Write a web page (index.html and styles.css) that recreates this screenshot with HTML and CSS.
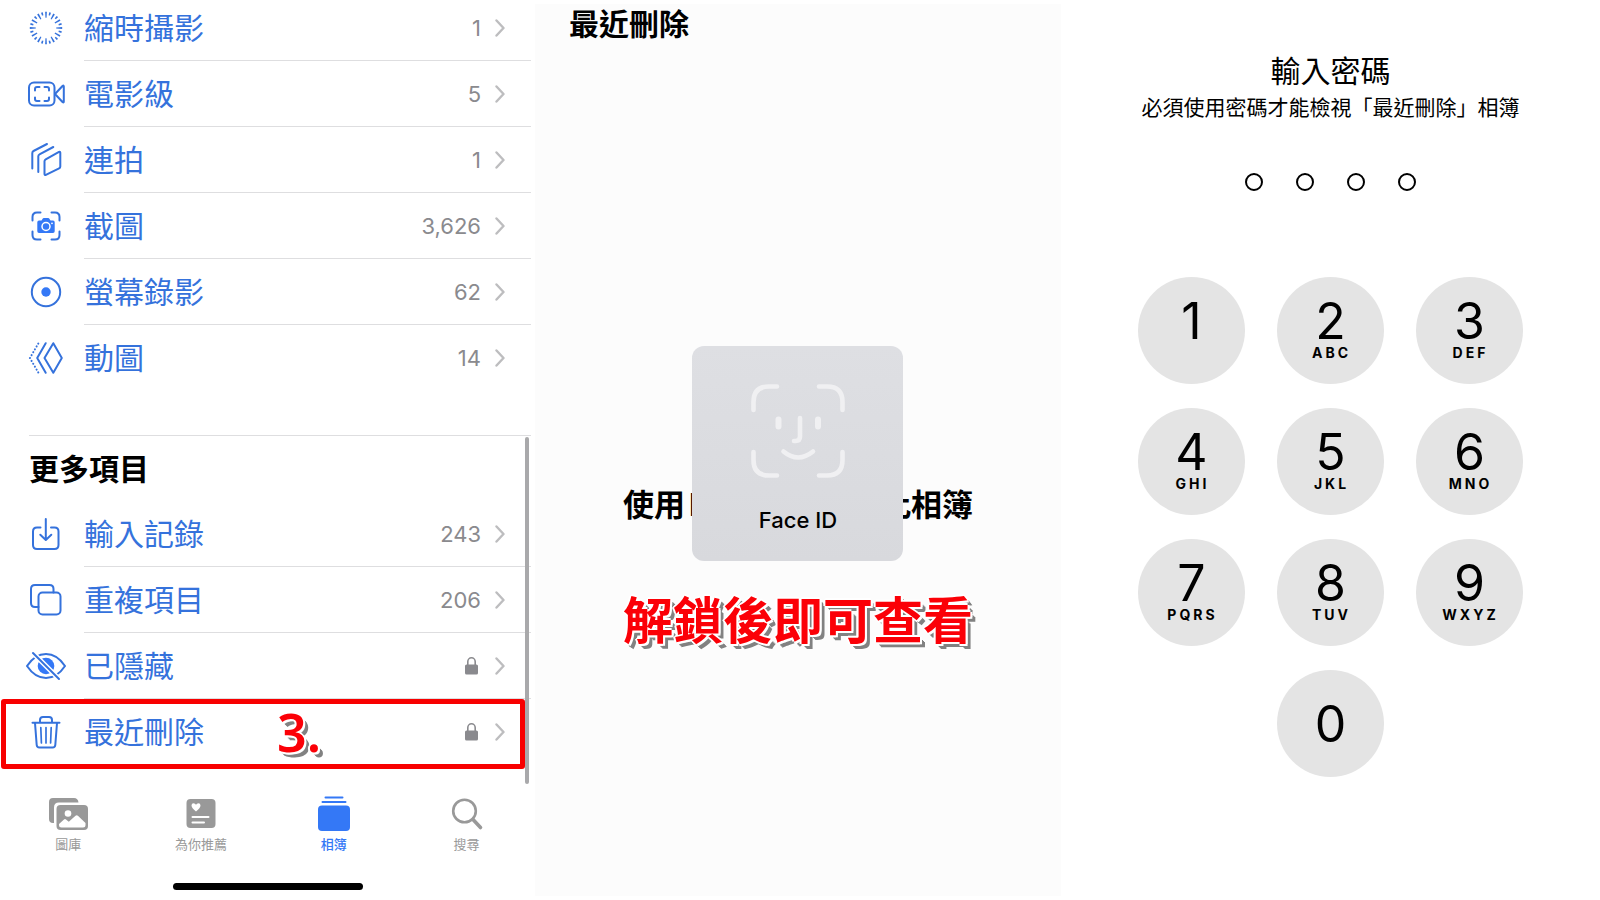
FILE: index.html
```
<!DOCTYPE html>
<html lang="zh-Hant">
<head>
    <meta charset="UTF-8">
    <meta name="viewport" content="width=device-width, initial-scale=1.0">
    <title>最近刪除</title>
    <link rel="stylesheet" href="styles.css">
</head>
<body>

    <svg class="defs" width="0" height="0" aria-hidden="true">
        <symbol id="chevron" viewBox="0 0 10 18"><path d="M1.5 1.5 8.5 9l-7 7.5" fill="none" stroke="#bdbdbf" stroke-width="2.4" stroke-linecap="round" stroke-linejoin="round"/></symbol>
        <symbol id="lock" viewBox="0 0 13 18"><rect y="7.5" width="13" height="10" rx="1.6" fill="#8a8a8e"/><path d="M2.8 8V4.8a3.7 4 0 0 1 7.4 0V8" fill="none" stroke="#8a8a8e" stroke-width="1.6"/></symbol>
    </svg>

    <main class="steps">
        <!-- 相簿清單 -->
        <section class="panel albums">
            <nav class="list media-list">
                <a class="row" href="#">
                    <svg class="icon" viewBox="0 0 40 40"><circle cx="20" cy="20" r="13.2" stroke-width="6" pathLength="240" stroke-dasharray="4.4 15.6" stroke-dashoffset="2.2"/><circle cx="20" cy="20" r="14.6" stroke-width="3" pathLength="240" stroke-dasharray="4.2 15.8" stroke-dashoffset="-7.9"/></svg>
                    <span class="line"><span class="name">縮時攝影</span><span class="count">1</span><svg class="chevron"><use href="#chevron"/></svg></span>
                </a>
                <a class="row" href="#">
                    <svg class="icon" viewBox="0 0 40 40"><rect x="3" y="8.5" width="25.5" height="23" rx="5"/><path d="M29 20l7.5-8q1.3-1 1.3.6v14.8q0 1.6-1.3.6zM9 16.5v-1.5q0-2 2-2h2.5M18.5 13h2.5q2 0 2 2v1.5M23 23.5v1.5q0 2-2 2h-2.5M13.500 27h-2.5q-2 0-2-2v-1.5"/></svg>
                    <span class="line"><span class="name">電影級</span><span class="count">5</span><svg class="chevron"><use href="#chevron"/></svg></span>
                </a>
                <a class="row" href="#">
                    <svg class="icon" viewBox="0 0 40 40"><path d="M21 4 7.5 11q-1.2.6-1.2 2V28.5M27.3 7 13.5 14.3q-1.2.6-1.2 2V32M18.5 21.3q0-1.3 1.2-2L33 11.9q1.3-.6 1.3.8V26.5q0 1.3-1.2 1.9L19.9 34.8q-1.4.6-1.4-.8z"/></svg>
                    <span class="line"><span class="name">連拍</span><span class="count">1</span><svg class="chevron"><use href="#chevron"/></svg></span>
                </a>
                <a class="row" href="#">
                    <svg class="icon" viewBox="0 0 40 40"><path d="M6.5 14.5V11q0-4.500 4.500-4.500h3.500M25.500 6.500H29q4.500 0 4.500 4.500v3.500M33.500 25.500V29q0 4.500-4.500 4.500h-3.500M14.500 33.500H11q-4.500 0-4.500-4.500v-3.500"/><path class="solid" d="M13 14.500h2.500l1.300-2q.3-.4.900-.4h4.600q.6 0 .9.400l1.300 2H27q1.700 0 1.700 1.700v9q0 1.700-1.700 1.700H13q-1.700 0-1.700-1.700v-9q0-1.700 1.700-1.700z"/><circle class="white" cx="20" cy="20.5" r="4"/><circle class="white-dot" cx="26" cy="17.3" r=".9"/></svg>
                    <span class="line"><span class="name">截圖</span><span class="count">3,626</span><svg class="chevron"><use href="#chevron"/></svg></span>
                </a>
                <a class="row" href="#">
                    <svg class="icon" viewBox="0 0 40 40"><circle cx="20" cy="20" r="14.2"/><circle class="solid" cx="20" cy="20" r="4.7"/></svg>
                    <span class="line"><span class="name">螢幕錄影</span><span class="count">62</span><svg class="chevron"><use href="#chevron"/></svg></span>
                </a>
                <a class="row" href="#">
                    <svg class="icon" viewBox="0 0 40 40"><path d="M27.3 5.2 35.8 20l-8.5 14.8L18.5 20zM19.7 5.2 11.2 20l8.5 14.8"/><path d="M12.3 5.5 3.9 20l8.4 14.5" stroke-dasharray=".1 3.24"/></svg>
                    <span class="line"><span class="name">動圖</span><span class="count">14</span><svg class="chevron"><use href="#chevron"/></svg></span>
                </a>
            </nav>

            <div class="more">
                <h2 class="more-title">更多項目</h2>
                <nav class="list">
                    <a class="row" href="#">
                        <svg class="icon" viewBox="0 0 40 40"><path d="M14.5 13.5H11q-4 0-4 4V31q0 4 4 4h17.5q4 0 4-4V17.5q0-4-4-4H25M19.8 5v20.5M14.3 20.8l5.500 5.200 5.500-5.200"/></svg>
                        <span class="line"><span class="name">輸入記錄</span><span class="count">243</span><svg class="chevron"><use href="#chevron"/></svg></span>
                    </a>
                    <a class="row" href="#">
                        <svg class="icon" viewBox="0 0 40 40"><rect x="12.5" y="12.5" width="22" height="22" rx="4"/><path d="M12.5 27H9q-4 0-4-4V9q0-4 4-4h14.5q4 0 4 4v3.5"/></svg>
                        <span class="line"><span class="name">重複項目</span><span class="count">206</span><svg class="chevron"><use href="#chevron"/></svg></span>
                    </a>
                    <a class="row" href="#">
                        <svg class="icon" viewBox="0 0 40 40"><path d="M1 20Q9 8 20 8t19 12Q31 32 20 32T1 20z"/><circle class="solid" cx="20" cy="20" r="8.3"/><path class="gap" d="M6 6l27.5 27.5"/><path d="M7 7l26 26"/></svg>
                        <span class="line"><span class="name">已隱藏</span><svg class="lock" role="img" aria-label="已鎖定"><use href="#lock"/></svg><svg class="chevron"><use href="#chevron"/></svg></span>
                    </a>
                    <a class="row marked" href="#">
                        <svg class="icon" viewBox="0 0 40 40"><path d="M6.5 10.8h27M14 10.5V8q0-3 3-3h6q3 0 3 3v2.5M9 11l1.7 22q.2 2.5 2.7 2.5h13.2q2.5 0 2.7-2.5L31 11"/><path d="M14.8 15.5l.6 15.5M20 15.5V31M25.2 15.5 24.6 31" stroke-width="1.7"/></svg>
                        <span class="line"><span class="name">最近刪除</span><svg class="lock" role="img" aria-label="已鎖定"><use href="#lock"/></svg><svg class="chevron"><use href="#chevron"/></svg></span>
                        <span class="step-no note">3.</span>
                    </a>
                </nav>
                <div class="scroll-thumb"></div>
            </div>

            <nav class="tabs">
                <a class="tab" href="#">
                    <svg viewBox="0 0 40 36"><path fill="currentColor" d="M5 2h21q4 0 4.5 4.5H11q-5 0-5 5V27H5q-4 0-4-4V6q0-4 4-4z"/><rect x="8.5" y="9" width="31.5" height="25" rx="4" fill="currentColor"/><circle cx="20" cy="17.5" r="3.3" fill="#fff"/><path fill="#fff" d="M11 28l5-4.5q1-.8 2 0l2.8 2.3 6.7-6q1.2-1 2.4 0L37.5 27v2q0 2.5-2.5 2.5H13.500Q11 31.500 11 29z"/></svg>
                    <span>圖庫</span>
                </a>
                <a class="tab" href="#">
                    <svg viewBox="0 0 40 36"><rect x="5.5" y="3" width="29" height="29" rx="4" fill="currentColor"/><path fill="#fff" d="M15 15.5Q10.500 12 10.500 9.500q0-2.300 2.100-2.300 1.600 0 2.400 1.600.8-1.600 2.400-1.600 2.100 0 2.100 2.300 0 2.500-4.500 6z"/><path d="M11.5 21h16M11.5 26.500h11.500" stroke="#fff" stroke-width="2" stroke-linecap="round"/></svg>
                    <span>為你推薦</span>
                </a>
                <a class="tab current" href="#">
                    <svg viewBox="0 0 40 36"><rect x="4" y="9.5" width="32" height="25.5" rx="4" fill="currentColor"/><path d="M8.5 6h23M11.5 1.5h17" stroke="currentColor" stroke-width="2" stroke-linecap="round"/></svg>
                    <span>相簿</span>
                </a>
                <a class="tab" href="#">
                    <svg viewBox="0 0 40 36"><circle cx="17.5" cy="15" r="11.3" fill="none" stroke="currentColor" stroke-width="2.6"/><path d="M26 23.5l7.5 8" stroke="currentColor" stroke-width="3.6" stroke-linecap="round"/></svg>
                    <span>搜尋</span>
                </a>
            </nav>
            <div class="home-bar"></div>
        </section>

        <!-- Face ID 解鎖 -->
        <section class="panel unlock">
            <h1 class="unlock-title">最近刪除</h1>
            <div class="prompt">
                <p class="prompt-text">使用<span class="latin">Face ID</span>檢視此相簿</p>
                <div class="face-card">
                    <svg class="face" viewBox="0 0 94 94"><path d="M2.5 26V18Q2.5 2.5 18 2.5h8M68 2.5h8q15.5 0 15.5 15.5v8M91.5 68v8q0 15.5-15.5 15.5h-8M26 91.5h-8Q2.5 91.5 2.5 76v-8" stroke-width="4.6"/><path d="M27.5 35.5v7M67 35.5v7" stroke-width="6"/><path d="M49 34v18.5q0 4.5-4.5 4.5h-1.5M32.5 67.5q14.500 12 29.500 0" stroke-width="4.6"/></svg>
                    <span class="face-label">Face ID</span>
                </div>
            </div>
            <p class="caption note">解鎖後即可查看</p>
        </section>

        <!-- 密碼輸入 -->
        <section class="panel passcode">
            <h2 class="pass-title">輸入密碼</h2>
            <p class="pass-text">必須使用密碼才能檢視「最近刪除」相簿</p>
            <div class="dots"><i></i><i></i><i></i><i></i></div>
            <div class="keypad">
                <button class="key" type="button">1<small></small></button>
                <button class="key" type="button">2<small>ABC</small></button>
                <button class="key" type="button">3<small>DEF</small></button>
                <button class="key" type="button">4<small>GHI</small></button>
                <button class="key" type="button">5<small>JKL</small></button>
                <button class="key" type="button">6<small>MNO</small></button>
                <button class="key" type="button">7<small>PQRS</small></button>
                <button class="key" type="button">8<small>TUV</small></button>
                <button class="key" type="button">9<small>WXYZ</small></button>
                <button class="key zero" type="button">0</button>
            </div>
        </section>
    </main>

</body>
</html>
```
FILE: styles.css
```
* {
    margin: 0;
    padding: 0;
    box-sizing: border-box;
}

body {
    background: #fff;
    color: #000;
    font-family: Inter, "Noto Sans CJK TC", sans-serif;
    overflow-x: hidden;
}

a {
    color: inherit;
    text-decoration: none;
}

.defs {
    position: absolute;
}

.steps {
    display: grid;
    grid-template-columns: 535fr 526fr 539fr;
    min-height: 100vh;
    overflow: hidden;
}

/* albums */
.media-list {
    margin: -5px 4px 0 0;
}

.row {
    position: relative;
    display: flex;
    align-items: center;
    gap: 18px;
    height: 66px;
    padding-left: 26px;
    color: #3572dc;
}

.icon {
    flex: none;
    width: 40px;
    height: 40px;
    fill: none;
    stroke: #3572dc;
    stroke-width: 2;
    stroke-linecap: round;
    stroke-linejoin: round;
}

.icon circle {
    stroke-linecap: butt;
}

.icon .solid {
    fill: #3478f6;
    stroke: none;
}

.icon .white {
    stroke: #fff;
    stroke-width: 1.5;
}

.icon .white-dot {
    fill: #fff;
    stroke: none;
}

.icon .gap {
    stroke: #fff;
    stroke-width: 5;
}

.line {
    flex: 1;
    display: flex;
    align-items: center;
    height: 100%;
    padding-right: 26px;
    border-bottom: 1px solid #dedee0;
}

.row:last-child .line {
    border-bottom-color: transparent;
}

.name {
    flex: 1;
    font-size: 30px;
    line-height: 40px;
}

.count {
    color: #8a8a8e;
    font-size: 22px;
}

.chevron {
    width: 10px;
    height: 18px;
    margin-left: 14px;
}

.lock {
    width: 13px;
    height: 18px;
    margin-right: 3px;
}

.more {
    position: relative;
    margin: 44px 4px 0 0;
}

.more-title {
    height: 66px;
    margin-left: 29px;
    border-top: 1px solid #dedee0;
    font-size: 30px;
    font-weight: 700;
    line-height: 66px;
}

.scroll-thumb {
    position: absolute;
    top: 2px;
    right: 2px;
    bottom: -19px;
    width: 4px;
    border-radius: 2px;
    background: #a9a9ab;
}

.marked::after {
    content: "";
    position: absolute;
    inset: 0 6px -4px 1px;
    border: 5px solid #f80000;
    border-radius: 3px;
}

.note {
    color: #fb0007;
    text-shadow: 2px 0 #fff, -2px 0 #fff, 0 2px #fff, 0 -2px #fff, 1px 1px #fff, -1px -1px #fff, 2px 2px #fff, 3px 3px #828282, 4px 4px #828282, 5px 5px #828282;
}

.step-no {
    position: absolute;
    left: 277px;
    font-family: "Noto Sans", sans-serif;
    font-size: 52px;
    font-weight: 600;
    line-height: 60px;
}

.tabs {
    display: grid;
    grid-template-columns: repeat(4, 1fr);
    margin-top: 31px;
    padding: 0 2px;
}

.tab {
    display: flex;
    flex-direction: column;
    align-items: center;
    gap: 2px;
    color: #999;
    font-size: 13px;
    line-height: 20px;
}

.tab svg {
    width: 40px;
    height: 36px;
}

.current {
    color: #3478f6;
    font-weight: 500;
}

.home-bar {
    width: 190px;
    height: 7px;
    margin: 29px auto 0;
    border-radius: 4px;
    background: #000;
}

/* face id */
.unlock {
    display: flex;
    flex-direction: column;
    align-items: center;
    margin: 4px 0;
    background: #fcfcfc;
}

.unlock-title {
    align-self: flex-start;
    margin-left: 34px;
    font-size: 30px;
    font-weight: 700;
    line-height: 40px;
}

.prompt {
    display: grid;
    justify-items: center;
    margin-top: 302px;
}

.prompt-text,
.face-card {
    grid-area: 1 / 1;
}

.prompt-text {
    align-self: end;
    margin-bottom: 36px;
    font-size: 31px;
    font-weight: 700;
    line-height: 40px;
    white-space: nowrap;
}

.latin {
    padding: 0 18px 0 4px;
}

.face-card {
    z-index: 1;
    display: flex;
    flex-direction: column;
    align-items: center;
    width: 211px;
    height: 215px;
    padding-top: 38px;
    border-radius: 12px;
    background: linear-gradient(#dedfe3, #d8d9dd);
}

.face {
    width: 94px;
    height: 94px;
    fill: none;
    stroke: #f0f0f2;
    stroke-linecap: round;
}

.face-label {
    margin-top: 27px;
    font-size: 22px;
    font-weight: 500;
    line-height: 30px;
}

.caption {
    margin-top: 25px;
    font-size: 50px;
    font-weight: 700;
    line-height: 70px;
    white-space: nowrap;
}

/* passcode */
.passcode {
    display: flex;
    flex-direction: column;
    align-items: center;
    padding-top: 51px;
}

.pass-title {
    font-size: 30px;
    font-weight: 400;
    line-height: 40px;
}

.pass-text {
    font-size: 21px;
    line-height: 34px;
    white-space: nowrap;
}

.dots {
    display: flex;
    gap: 33px;
    margin-top: 48px;
}

.dots i {
    width: 18px;
    height: 18px;
    border: 2px solid #000;
    border-radius: 50%;
}

.keypad {
    display: grid;
    grid-template-columns: repeat(3, 107px);
    gap: 24px 32px;
    margin-top: 86px;
}

.key {
    display: flex;
    flex-direction: column;
    align-items: center;
    justify-content: center;
    height: 107px;
    padding-bottom: 3px;
    border: 0;
    border-radius: 50%;
    background: #e4e4e4;
    color: #000;
    font-family: inherit;
    font-size: 50px;
    line-height: 47px;
}

.key small {
    height: 16px;
    padding-left: 2px;
    font-size: 14px;
    font-weight: 700;
    letter-spacing: 3px;
    line-height: 16px;
}

.zero {
    grid-column: 2;
    padding-bottom: 0;
    line-height: 50px;
}
```
